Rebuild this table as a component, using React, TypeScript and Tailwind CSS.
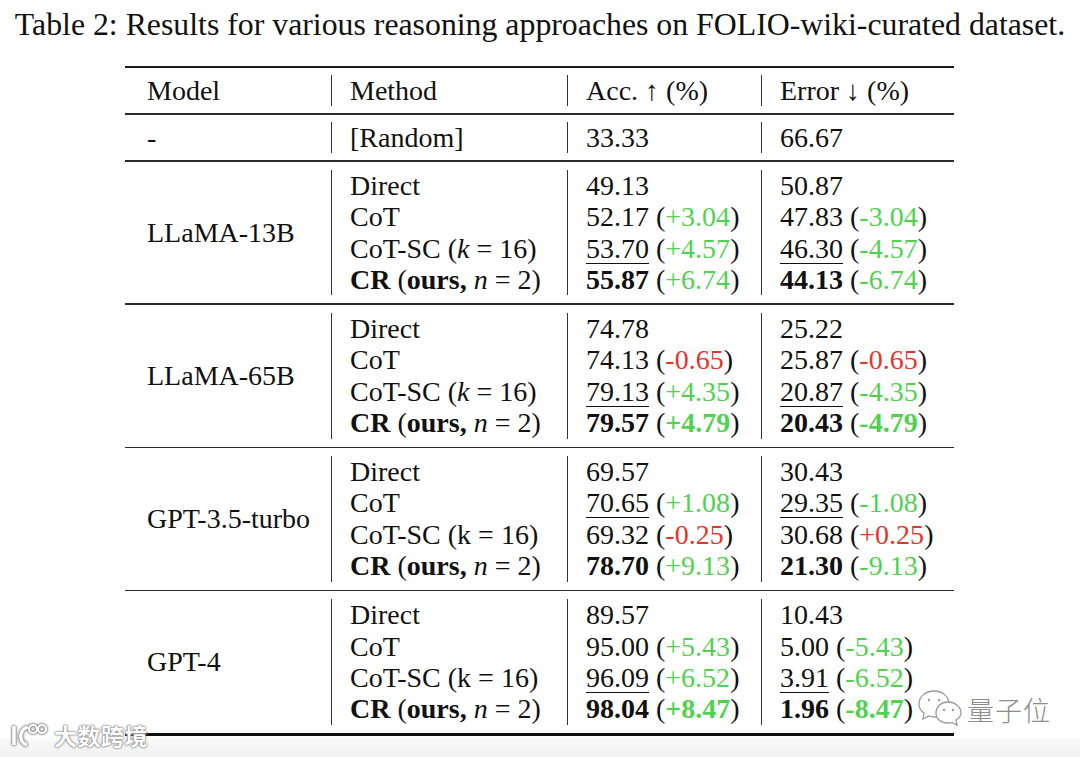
import type { ReactNode } from 'react'

type Val = { v: string; d?: string; c?: 'g' | 'r'; u?: boolean }
type Row = { acc: Val; err: Val }
type Group = { model: string; italicK: boolean; boldDelta: boolean; rows: Row[] }

const GROUPS: Group[] = [
  {
    model: 'LLaMA-13B',
    italicK: true,
    boldDelta: false,
    rows: [
      { acc: { v: '49.13' }, err: { v: '50.87' } },
      { acc: { v: '52.17', d: '+3.04', c: 'g' }, err: { v: '47.83', d: '-3.04', c: 'g' } },
      { acc: { v: '53.70', d: '+4.57', c: 'g', u: true }, err: { v: '46.30', d: '-4.57', c: 'g', u: true } },
      { acc: { v: '55.87', d: '+6.74', c: 'g' }, err: { v: '44.13', d: '-6.74', c: 'g' } },
    ],
  },
  {
    model: 'LLaMA-65B',
    italicK: true,
    boldDelta: true,
    rows: [
      { acc: { v: '74.78' }, err: { v: '25.22' } },
      { acc: { v: '74.13', d: '-0.65', c: 'r' }, err: { v: '25.87', d: '-0.65', c: 'r' } },
      { acc: { v: '79.13', d: '+4.35', c: 'g', u: true }, err: { v: '20.87', d: '-4.35', c: 'g', u: true } },
      { acc: { v: '79.57', d: '+4.79', c: 'g' }, err: { v: '20.43', d: '-4.79', c: 'g' } },
    ],
  },
  {
    model: 'GPT-3.5-turbo',
    italicK: false,
    boldDelta: false,
    rows: [
      { acc: { v: '69.57' }, err: { v: '30.43' } },
      { acc: { v: '70.65', d: '+1.08', c: 'g', u: true }, err: { v: '29.35', d: '-1.08', c: 'g', u: true } },
      { acc: { v: '69.32', d: '-0.25', c: 'r' }, err: { v: '30.68', d: '+0.25', c: 'r' } },
      { acc: { v: '78.70', d: '+9.13', c: 'g' }, err: { v: '21.30', d: '-9.13', c: 'g' } },
    ],
  },
  {
    model: 'GPT-4',
    italicK: false,
    boldDelta: true,
    rows: [
      { acc: { v: '89.57' }, err: { v: '10.43' } },
      { acc: { v: '95.00', d: '+5.43', c: 'g' }, err: { v: '5.00', d: '-5.43', c: 'g' } },
      { acc: { v: '96.09', d: '+6.52', c: 'g', u: true }, err: { v: '3.91', d: '-6.52', c: 'g', u: true } },
      { acc: { v: '98.04', d: '+8.47', c: 'g' }, err: { v: '1.96', d: '-8.47', c: 'g' } },
    ],
  },
]

function Num({ val, bold, boldDelta }: { val: Val; bold?: boolean; boldDelta?: boolean }) {
  return (
    <div className="whitespace-nowrap">
      <span className={`${bold ? 'font-bold' : ''} ${val.u ? 'underline decoration-1 underline-offset-[5px]' : ''}`}>
        {val.v}
      </span>
      {val.d && (
        <>
          {' ('}
          <span className={`${val.c === 'r' ? 'text-[#e5342c]' : 'text-[#4fd24f]'} ${bold && boldDelta ? 'font-bold' : ''}`}>
            {val.d}
          </span>
          )
        </>
      )}
    </div>
  )
}

function Cell({ children }: { children: ReactNode }) {
  return <div className="border-l-[1.5px] border-[#333] pl-[18px]">{children}</div>
}

const RULE = 'h-[1.5px] bg-[#2a2a2a]'

export default function App() {
  return (
    <div
      className="w-[1080px] h-[757px] bg-white text-[#111] relative overflow-hidden flex flex-col"
      style={{ fontFamily: '"Liberation Serif", "Times New Roman", serif' }}
    >
      {/* caption */}
      <div className="text-center text-[31.8px] leading-[36px] pt-[7px] whitespace-nowrap">
        Table 2: Results for various reasoning approaches on FOLIO-wiki-curated dataset.
      </div>

      {/* table */}
      <div className="ml-[125px] w-[829px] mt-[23px] text-[28px] leading-[31.4px]">
        <div className="h-[2px] bg-[#1a1a1a]" />
        <div className="grid grid-cols-[206px_236px_194px_193px] py-[7px]">
          <div className="pl-[22px]">Model</div>
          <Cell>Method</Cell>
          <Cell>Acc. ↑ (%)</Cell>
          <Cell>Error ↓ (%)</Cell>
        </div>
        <div className={RULE} />
        <div className="grid grid-cols-[206px_236px_194px_193px] py-[7px]">
          <div className="pl-[22px]">-</div>
          <Cell>[Random]</Cell>
          <Cell>33.33</Cell>
          <Cell>66.67</Cell>
        </div>

        {GROUPS.map(g => (
          <div key={g.model}>
            <div className={RULE} />
            <div className="grid grid-cols-[206px_236px_194px_193px] py-2">
              <div className="pl-[22px] flex items-center">{g.model}</div>
              <Cell>
                <div>Direct</div>
                <div>CoT</div>
                <div className="whitespace-nowrap">
                  CoT-SC ({g.italicK ? <i>k</i> : 'k'} = 16)
                </div>
                <div className="whitespace-nowrap">
                  <b>CR</b> (<b>ours,</b> <i>n</i> = 2)
                </div>
              </Cell>
              <Cell>
                {g.rows.map((r, i) => (
                  <Num key={i} val={r.acc} bold={i === 3} boldDelta={g.boldDelta} />
                ))}
              </Cell>
              <Cell>
                {g.rows.map((r, i) => (
                  <Num key={i} val={r.err} bold={i === 3} boldDelta={g.boldDelta} />
                ))}
              </Cell>
            </div>
          </div>
        ))}
        <div className="h-[3px] bg-[#111]" />
      </div>

      {/* bottom band */}
      <div className="flex-1 mt-[2px] bg-gradient-to-b from-[#fafafa] to-[#f1f1f1]" />

      {/* watermark left */}
      <div className="absolute left-[8px] top-[722px] flex items-center gap-[6px] text-white [text-shadow:0_0_1px_#666,0_0_2px_#888,0_0_3px_#aaa]">
        <svg width="40" height="26" viewBox="0 0 40 26" fill="none" stroke="#fff" strokeWidth="3.5" style={{ filter: 'drop-shadow(0 0 1px #666) drop-shadow(0 0 1px #999)' }}>
          <path d="M6 4 V23" />
          <path d="M20 5 C11 7 10 20 19 23" />
          <circle cx="25" cy="7" r="4" strokeWidth="2.2" />
          <circle cx="34" cy="7" r="4" strokeWidth="2.2" />
        </svg>
        <span className="text-[23px] leading-[26px] font-bold tracking-[0.5px]" style={{ fontFamily: '"Noto Sans CJK SC", sans-serif' }}>
          大数跨境
        </span>
      </div>

      {/* watermark right */}
      <div className="absolute left-[917px] top-[689px] flex items-center gap-[4px]">
        <svg width="46" height="38" viewBox="0 0 46 38" fill="#fff" stroke="#9a9a9a" strokeWidth="1.3">
          <path d="M17 2 C8 2 2 8 2 15 C2 19 4 22 7 24 L6 30 L12 27 C14 27.5 15.5 28 17 28 C26 28 32 22 32 15 C32 8 26 2 17 2 Z" />
          <circle cx="12" cy="11" r="1.2" fill="#9a9a9a" stroke="none" />
          <circle cx="22" cy="11" r="1.2" fill="#9a9a9a" stroke="none" />
          <path d="M31 13 C24 13 19 18 19 24 C19 30 24 34 31 34 C32.5 34 33.5 34 35 33.5 L40 36 L39 31 C42 29 44 27 44 24 C44 18 38 13 31 13 Z" />
          <circle cx="27" cy="21" r="1.2" fill="#9a9a9a" stroke="none" />
          <circle cx="36" cy="21" r="1.2" fill="#9a9a9a" stroke="none" />
        </svg>
        <span
          className="text-[27px] leading-[30px] text-[#8d8d8d] mt-[4px] tracking-[1px]"
          style={{ fontFamily: '"Noto Sans CJK SC", sans-serif', fontWeight: 300 }}
        >
          量子位
        </span>
      </div>
    </div>
  )
}
